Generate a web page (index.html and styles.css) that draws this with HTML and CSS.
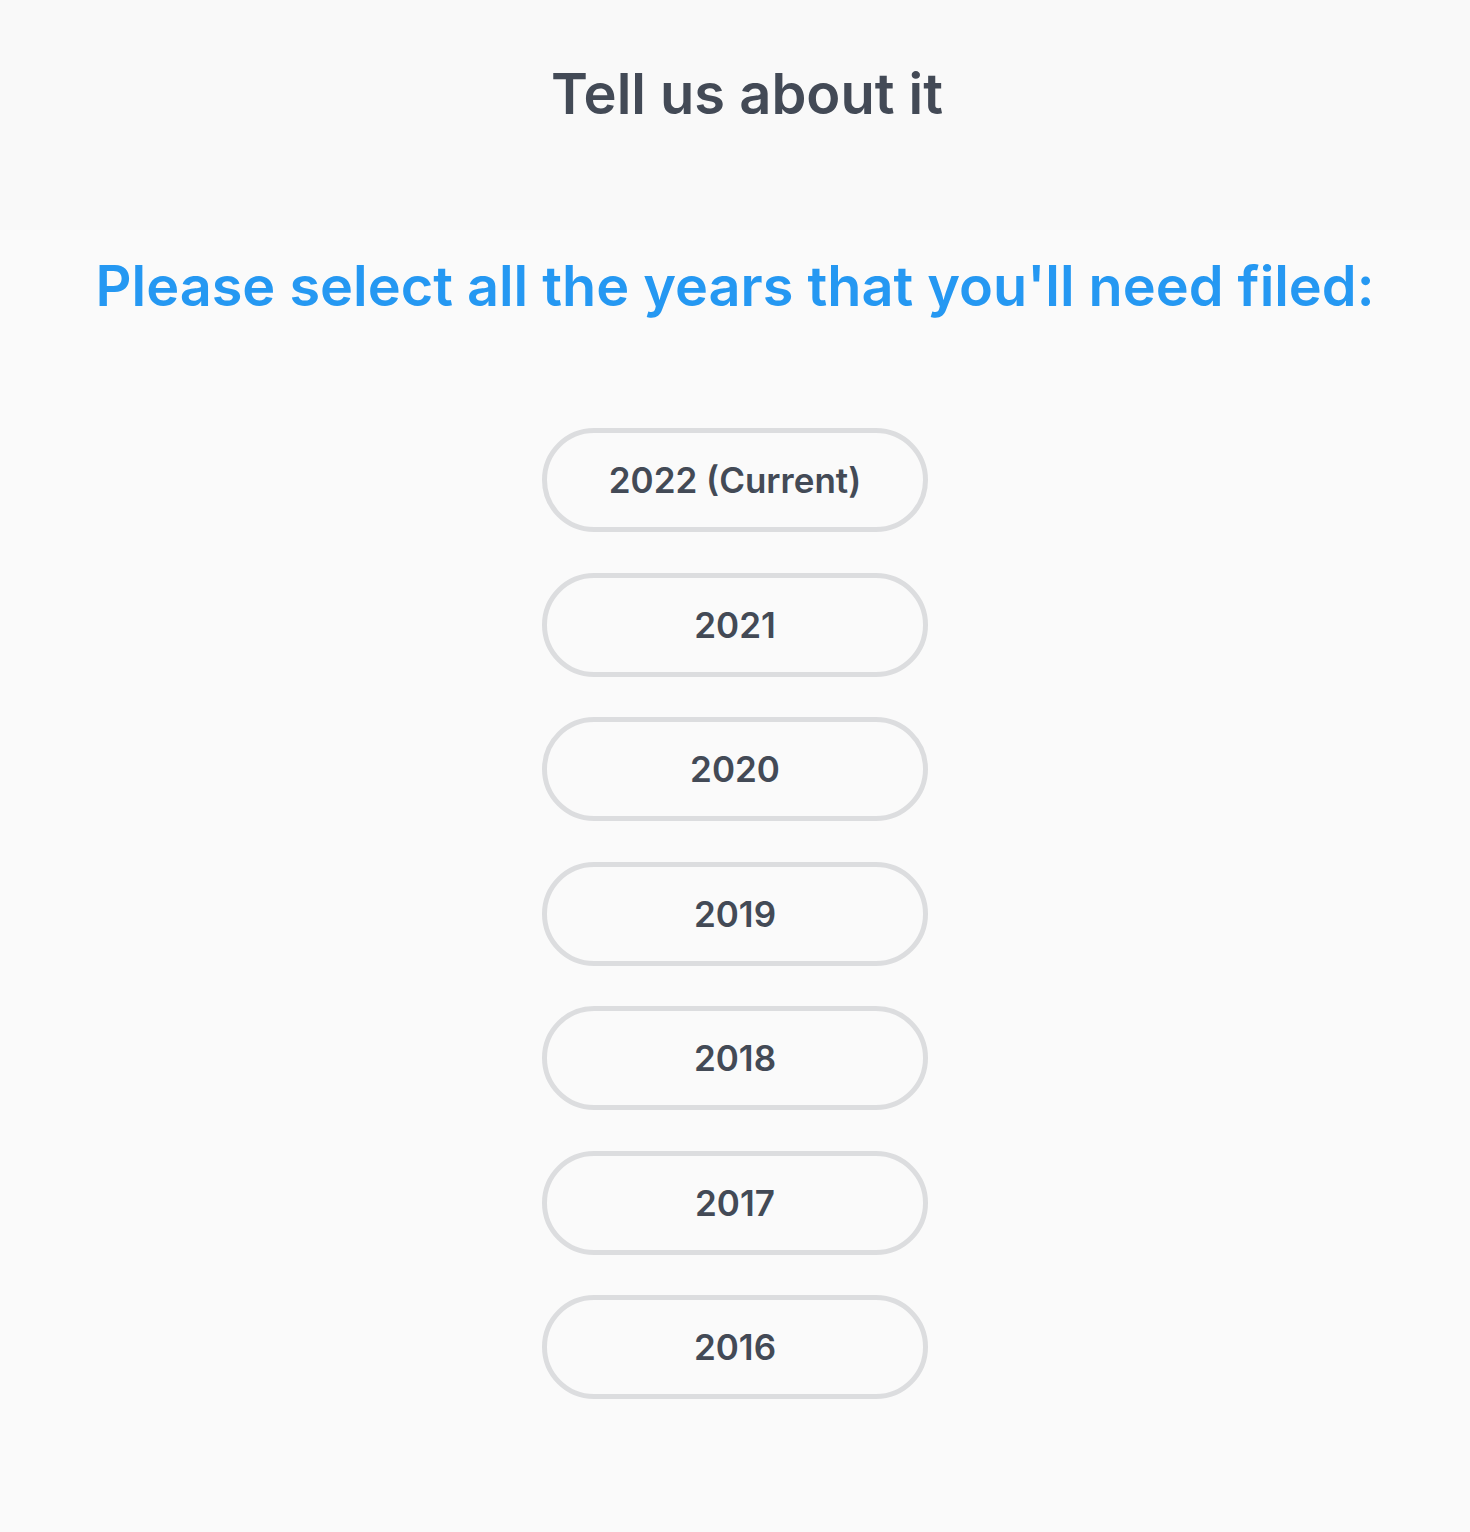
FILE: index.html
```html
<!DOCTYPE html>
<html>
<head>
<meta charset="utf-8">
<link rel="stylesheet" href="styles.css">
</head>
<body>
<div class="page">
  <header class="top">
    <h1 class="title">Tell us about it</h1>
  </header>
  <main class="content">
    <h2 class="question">Please select all the years that you'll need filed:</h2>
    <div class="options">
      <button class="opt">2022 (Current)</button>
      <button class="opt">2021</button>
      <button class="opt">2020</button>
      <button class="opt">2019</button>
      <button class="opt">2018</button>
      <button class="opt">2017</button>
      <button class="opt">2016</button>
    </div>
  </main>
</div>
</body>
</html>
```
FILE: styles.css
```css
html, body {
  margin: 0;
  padding: 0;
  background: #fafafa;
}
body {
  font-family: Inter, "Noto Sans", sans-serif;
  color: #434a56;
  min-height: 1532px;
}
.page {
  display: flex;
  flex-direction: column;
}
.top {
  height: 230px;
  background: #f9f9f9;
  display: flex;
  justify-content: center;
  padding-left: 24px;
}
.title {
  margin: 58px 0 0;
  font-size: 56px;
  font-weight: 600;
  line-height: 72px;
  color: #434a56;
}
.content {
  display: flex;
  flex-direction: column;
  align-items: center;
}
.question {
  margin: 20px 0 0;
  font-size: 55.8px;
  font-weight: 600;
  line-height: 72px;
  color: #2598f2;
}
.options {
  display: flex;
  flex-direction: column;
  gap: 40.5px;
  margin-top: 106px;
}
.opt {
  width: 386px;
  height: 104px;
  border: 5px solid #dcdddf;
  border-radius: 60px;
  background: transparent;
  font-family: Inter, "Noto Sans", sans-serif;
  font-size: 35px;
  font-weight: 600;
  color: #434a56;
  padding: 0;
}
```
